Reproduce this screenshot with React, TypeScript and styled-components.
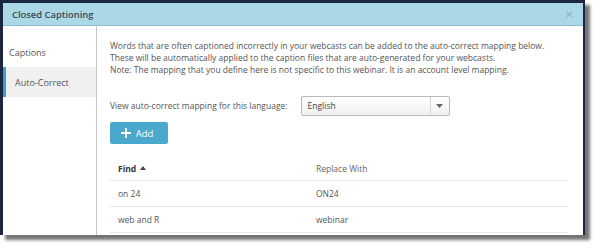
import React from 'react';
import styled, { createGlobalStyle } from 'styled-components';

const GlobalStyle = createGlobalStyle`
  html, body {
    margin: 0;
    padding: 0;
    background: #ffffff;
  }
  body {
    font-family: 'Open Sans', 'Noto Sans', sans-serif;
    -webkit-font-smoothing: antialiased;
  }
`;

const Page = styled.div`
  width: 596px;
  height: 248px;
  background: #ffffff;
`;

// the captured window: dark app background peeking round the modal
const Shot = styled.div`
  width: 585px;
  height: 235px;
  box-sizing: border-box;
  padding: 3px 2px 0 3px;
  background: #1d2640;
  box-shadow: 5px 5px 3px rgba(0, 0, 0, 0.55);
  display: flex;
`;

const Dialog = styled.div`
  flex: 1;
  display: flex;
  flex-direction: column;
  background: #ffffff;
  overflow: hidden;
`;

const Header = styled.div`
  height: 22px;
  flex: none;
  display: flex;
  align-items: center;
  justify-content: space-between;
  padding: 0 10px 0 9px;
  background: #abd8e6;
  border-bottom: 1px solid #8ec0d2;
  .title {
    font-size: 9.4px;
    font-weight: 600;
    color: #3b4a55;
  }
  .close {
    font-size: 10px;
    color: #8fb0bd;
    line-height: 1;
  }
`;

const Body = styled.div`
  flex: 1;
  display: flex;
  min-height: 0;
`;

const Sidebar = styled.div`
  width: 93px;
  flex: none;
  padding-top: 11px;
  border-right: 1px solid #c6c6c6;
  display: flex;
  flex-direction: column;
`;

const NavItem = styled.div<{ $active?: boolean }>`
  height: 30px;
  display: flex;
  align-items: center;
  padding-left: ${(p) => (p.$active ? '9px' : '6px')};
  font-size: 9px;
  color: #555;
  background: ${(p) => (p.$active ? '#f0f0f0' : 'transparent')};
  border-left: ${(p) => (p.$active ? '3px solid #3a9fcf' : '0')};
`;

const Content = styled.div`
  flex: 1;
  padding: 14px 15px 0 13px;
  color: #555;
  font-size: 8.5px;
`;

const Intro = styled.p`
  margin: 0;
  line-height: 12px;
  color: #555;
`;

const LangRow = styled.div`
  margin-top: 19px;
  display: flex;
  align-items: center;
  gap: 13px;
  height: 21px;
`;

const Select = styled.div`
  width: 149px;
  height: 20px;
  box-sizing: border-box;
  display: flex;
  align-items: center;
  border: 1px solid #b9b9b9;
  border-radius: 2px;
  background: linear-gradient(#ffffff, #f1f1f1);
  color: #444;
  .value {
    flex: 1;
    padding-left: 6px;
  }
  .caret {
    width: 18px;
    height: 100%;
    display: flex;
    align-items: center;
    justify-content: center;
    border-left: 1px solid #d6d6d6;
  }
`;

const AddButton = styled.button`
  margin-top: 6px;
  width: 58px;
  height: 22px;
  border: 0;
  border-radius: 2px;
  background: #4ba8cd;
  color: #ffffff;
  font-family: inherit;
  font-size: 9.5px;
  display: flex;
  align-items: center;
  justify-content: center;
  gap: 5px;
  padding: 0 4px 0 0;
`;

const Table = styled.div`
  margin-top: 12px;
  width: 458px;
`;

const Row = styled.div<{ $head?: boolean }>`
  display: grid;
  grid-template-columns: 198px 1fr;
  height: ${(p) => (p.$head ? '24px' : '25px')};
  align-items: center;
  border-bottom: 1px solid #e7e7e7;
  color: ${(p) => (p.$head ? '#666' : '#555')};
  div {
    padding-left: 8px;
  }
`;

const SortHead = styled.div`
  font-weight: 700;
  color: #333;
  display: flex;
  align-items: center;
  gap: 4px;
`;

const rows = [
  { find: 'on 24', replace: 'ON24' },
  { find: 'web and R', replace: 'webinar' },
];

const App = () => {
  return (
    <Page>
      <GlobalStyle />
      <Shot>
        <Dialog>
          <Header>
            <span className="title">Closed Captioning</span>
            <span className="close">✕</span>
          </Header>
          <Body>
            <Sidebar>
              <NavItem>Captions</NavItem>
              <NavItem $active>Auto-Correct</NavItem>
            </Sidebar>
            <Content>
              <Intro>
                Words that are often captioned incorrectly in your webcasts can be added to the
                auto-correct mapping below.
                <br />
                These will be automatically applied to the caption files that are auto-generated
                for your webcasts.
                <br />
                Note: The mapping that you define here is not specific to this webinar. It is an
                account level mapping.
              </Intro>
              <LangRow>
                <span>View auto-correct mapping for this language:</span>
                <Select>
                  <span className="value">English</span>
                  <span className="caret">
                    <svg width="7" height="4" viewBox="0 0 7 4">
                      <path d="M0 0h7L3.5 4z" fill="#666" />
                    </svg>
                  </span>
                </Select>
              </LangRow>
              <AddButton>
                <svg width="10" height="10" viewBox="0 0 10 10">
                  <path d="M5 0v10M0 5h10" stroke="#fff" strokeWidth="1.8" />
                </svg>
                Add
              </AddButton>
              <Table>
                <Row $head>
                  <SortHead>
                    Find
                    <svg width="6" height="4" viewBox="0 0 6 4">
                      <path d="M0 4h6L3 0z" fill="#444" />
                    </svg>
                  </SortHead>
                  <div>Replace With</div>
                </Row>
                {rows.map((r) => (
                  <Row key={r.find}>
                    <div>{r.find}</div>
                    <div>{r.replace}</div>
                  </Row>
                ))}
              </Table>
            </Content>
          </Body>
        </Dialog>
      </Shot>
    </Page>
  );
};

export default App;
